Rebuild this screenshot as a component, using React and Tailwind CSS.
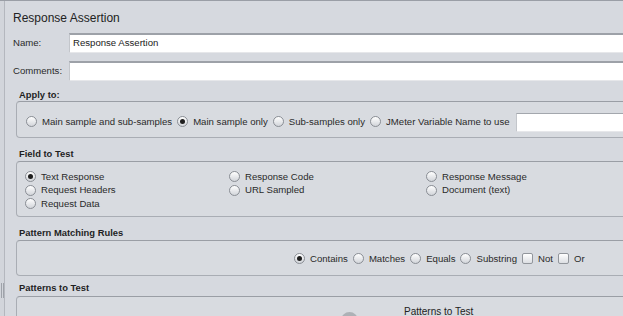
import React from "react";

const font = { fontFamily: '"Liberation Sans", Arial, sans-serif' };

function Radio({ checked }) {
  return (
    <span className="relative inline-flex h-[11px] w-[11px] shrink-0 items-center justify-center rounded-full border border-[#8a8e95] bg-gradient-to-b from-[#ffffff] to-[#d2d5da]">
      {checked && <span className="h-[5px] w-[5px] rounded-full bg-[#1e1e1e]" />}
    </span>
  );
}

function Check() {
  return (
    <span className="inline-block h-[11px] w-[11px] shrink-0 rounded-[2px] border border-[#92969c] bg-gradient-to-b from-[#ffffff] to-[#dcdfe3]" />
  );
}

function Opt({ checked, children }) {
  return (
    <span className="flex items-center gap-[5px] whitespace-nowrap">
      <Radio checked={checked} />
      <span>{children}</span>
    </span>
  );
}

export default function App() {
  return (
    <div
      className="relative h-[316px] w-[623px] overflow-hidden bg-[#d6d9df] text-[9.6px] text-[#2a2a2a]"
      style={font}
    >
      <div className="h-[1px] w-full bg-[#9a9ea6]" />
      <div className="flex h-[315px]">
        {/* left strip */}
        <div className="relative w-[5px] shrink-0 border-r border-[#b4b7be] bg-[#d2d5db]">
          <div className="absolute left-[1px] top-[282px] h-[15px] w-[1px] bg-[#9ea2a9]" />
          <div className="absolute left-[3px] top-[282px] h-[15px] w-[1px] bg-[#9ea2a9]" />
        </div>

        <div className="w-[900px] shrink-0 pl-[8px]">
          <div className="mt-[9px] h-[16px] text-[12px] leading-[16px] text-[#222]">
            Response Assertion
          </div>

          <div className="mt-[7px] flex h-[20px] items-center">
            <div className="w-[56px] shrink-0">Name:</div>
            <div className="flex h-[20px] flex-1 items-center border border-[#c3c6cb] border-t-2 border-t-[#9da1a8] border-b-[#e6e7ea] bg-white pl-[3px] text-[#222]">
              Response Assertion
            </div>
          </div>

          <div className="mt-[8px] flex h-[20px] items-center">
            <div className="w-[56px] shrink-0">Comments:</div>
            <div className="h-[20px] flex-1 border border-[#c3c6cb] border-t-2 border-t-[#9da1a8] border-b-[#e6e7ea] bg-white" />
          </div>

          {/* Apply to */}
          <div className="ml-[6px] mt-[8px] h-[12px] text-[9.4px] font-bold leading-[12px] text-[#1f1f1f]">
            Apply to:
          </div>
          <div className="ml-[3px] flex h-[37px] items-center gap-[5px] rounded-[4px] border border-[#a9adb4] border-t-[#9a9ea5] bg-[#d8dbe0] pl-[9px] pt-[5px]">
            <Opt>Main sample and sub-samples</Opt>
            <Opt checked>Main sample only</Opt>
            <Opt>Sub-samples only</Opt>
            <Opt>JMeter Variable Name to use</Opt>
            <div className="ml-[1px] h-[19px] flex-1 border border-[#c3c6cb] border-t-[#a3a7ad] border-b-[#e6e7ea] bg-white" />
          </div>

          {/* Field to Test */}
          <div className="ml-[6px] mt-[10px] h-[12px] text-[9.4px] font-bold leading-[12px] text-[#1f1f1f]">
            Field to Test
          </div>
          <div className="ml-[3px] mt-[1px] h-[56px] rounded-[4px] border border-[#a9adb4] border-t-[#9a9ea5] bg-[#d8dbe0] pl-[8px] pt-[8px]">
            <div className="grid grid-cols-[204px_197px_1fr] grid-rows-[13.5px_13.5px_13.5px] items-center">
              <Opt checked>Text Response</Opt>
              <Opt>Response Code</Opt>
              <Opt>Response Message</Opt>
              <Opt>Request Headers</Opt>
              <Opt>URL Sampled</Opt>
              <Opt>Document (text)</Opt>
              <Opt>Request Data</Opt>
            </div>
          </div>

          {/* Pattern Matching Rules */}
          <div className="ml-[6px] mt-[10px] h-[12px] text-[9.4px] font-bold leading-[12px] text-[#1f1f1f]">
            Pattern Matching Rules
          </div>
          <div className="ml-[3px] mt-[1px] flex h-[36px] items-center gap-[5px] rounded-[4px] border border-[#a9adb4] border-t-[#9a9ea5] bg-[#d8dbe0] pl-[277px] pt-[2px]">
            <Opt checked>Contains</Opt>
            <Opt>Matches</Opt>
            <Opt>Equals</Opt>
            <Opt>Substring</Opt>
            <span className="flex items-center gap-[5px]">
              <Check />
              <span>Not</span>
            </span>
            <span className="flex items-center gap-[5px]">
              <Check />
              <span>Or</span>
            </span>
          </div>

          {/* Patterns to Test */}
          <div className="ml-[6px] mt-[6px] h-[12px] text-[9.4px] font-bold leading-[12px] text-[#1f1f1f]">
            Patterns to Test
          </div>
          <div className="ml-[3px] mt-[2px] h-[60px] rounded-[4px] border border-[#a9adb4] border-t-[#9a9ea5] bg-[#d8dbe0] pl-[387px] pt-[9px]">
            <div className="text-[10px] leading-[12px] text-[#222]">Patterns to Test</div>
          </div>
        </div>
      </div>

      {/* watermark fragment */}
      <div className="absolute left-[341px] top-[312px] h-[17px] w-[17px] rounded-full bg-[#a3a6ab] opacity-80" />
    </div>
  );
}
